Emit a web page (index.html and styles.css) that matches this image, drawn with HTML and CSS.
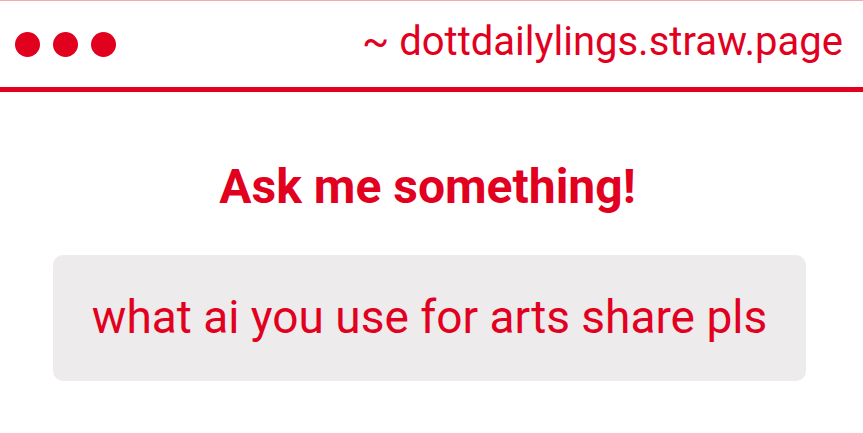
FILE: index.html
```html
<!DOCTYPE html>
<html>
<head>
<meta charset="utf-8">
<link rel="stylesheet" href="styles.css">
</head>
<body>
<div class="topline"></div>
<header class="bar">
  <div class="dots"><span class="dot"></span><span class="dot"></span><span class="dot"></span></div>
  <div class="url">~ dottdailylings.straw.page</div>
</header>
<main class="content">
  <h1 class="title">Ask me something!</h1>
  <div class="question">what ai you use for arts share pls</div>
</main>
</body>
</html>
```
FILE: styles.css
```css
html, body { margin: 0; padding: 0; background: #fff; }
body { font-family: Roboto, "Noto Sans", sans-serif; color: #e2001f; width: 863px; height: 433px; overflow: hidden; }
.topline { height: 1px; background: #f5a9b2; }
.bar {
  height: 86px;
  border-bottom: 5px solid #e2001f;
  display: flex; align-items: center; justify-content: space-between;
  padding: 0 20px 0 15px;
}
.dots { display: flex; gap: 13px; }
.dot { width: 25px; height: 25px; border-radius: 50%; background: #e2001f; display: block; }
.url { font-size: 40px; line-height: 47px; margin-bottom: 5px; }
.content { display: flex; flex-direction: column; padding: 0 57px 0 53px; }
.title { font-size: 48px; font-weight: 700; margin: 67px 0 0; padding-right: 4px; line-height: 56px; text-align: center; }
.question {
  margin-top: 40px;
  height: 126px; box-sizing: border-box;
  background: #edebec; border-radius: 10px;
  display: flex; align-items: center; justify-content: center;
  padding-bottom: 2px;
  font-size: 46px;
}
```
